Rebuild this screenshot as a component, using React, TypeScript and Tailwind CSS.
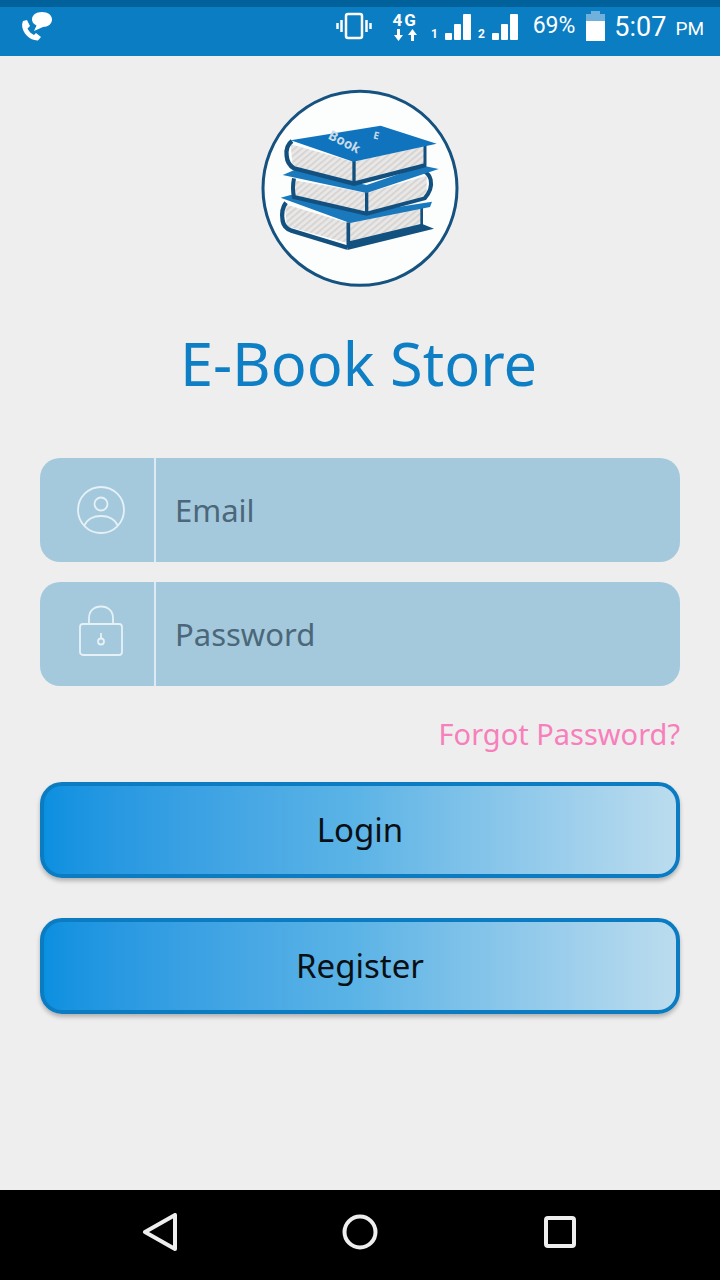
const font = { fontFamily: '"Noto Sans", sans-serif' };
const statusFont = { fontFamily: 'Roboto, sans-serif' };

/** Book stack logo, coordinates follow the reference crop at 3x */
const BookLogo = () => (
  <svg width="220" height="215" viewBox="0 0 660 645" className="block">
    <defs>
      <pattern id="pages" width="14" height="14" patternUnits="userSpaceOnUse" patternTransform="rotate(-40)">
        <rect width="14" height="14" fill="#e9e8e6" />
        <rect width="14" height="6" fill="#d6d5d4" />
      </pattern>
    </defs>
    <circle cx="330" cy="322" r="291" fill="#fcfdfd" stroke="#16527f" strokeWidth="9" />
    {/* bottom book */}
    <path d="M105 370 L292 425 L515 380 L515 434 L292 486 L110 436 Z" fill="url(#pages)" />
    <path d="M108 365 Q92 385 98 420 Q102 440 122 448 L292 500" fill="none" stroke="#12507f" strokeWidth="13" />
    <path d="M515 378 V436" stroke="#12507f" strokeWidth="8" />
    <path d="M295 424 V500" stroke="#12507f" strokeWidth="11" />
    <path d="M292 507 L552 443 L515 428 L292 482 Z" fill="#12507f" />
    <path d="M92 350 L130 340 L352 392 L546 362 L540 378 L300 426 Z" fill="#1a78bd" />
    {/* middle book */}
    <path d="M132 298 L348 335 L348 396 L132 346 Z" fill="url(#pages)" />
    <path d="M352 335 L530 284 L530 346 L352 392 Z" fill="url(#pages)" />
    <path d="M132 292 Q126 320 132 348 L350 398 L524 352 Q548 325 542 296 Q538 280 522 270" fill="none" stroke="#12507f" strokeWidth="12" />
    <path d="M350 332 V396" stroke="#12507f" strokeWidth="10" />
    <path d="M98 282 L135 266 L350 312 L520 254 L566 264 L350 336 Z" fill="#1a78bd" />
    {/* top book */}
    <path d="M122 190 L310 242 L525 195 L525 252 L310 304 L128 258 Z" fill="url(#pages)" />
    <path d="M126 180 Q106 195 110 225 Q112 250 132 262 L312 308 L528 252" fill="none" stroke="#12507f" strokeWidth="13" />
    <path d="M525 190 V254" stroke="#12507f" strokeWidth="9" />
    <path d="M312 238 V306" stroke="#12507f" strokeWidth="10" />
    <path d="M122 178 L392 134 L560 188 L310 242 Z" fill="#0f74bd" />
    <text x="0" y="0" transform="translate(232 172) rotate(27)" fill="#c9dbe9" fontSize="40" fontWeight="700" style={font}>Book</text>
    <text x="0" y="0" transform="translate(368 172) rotate(14)" fill="#c9dbe9" fontSize="30" fontWeight="700" style={font}>E</text>
  </svg>
);

const UserIcon = () => (
  <svg width="50" height="50" viewBox="0 0 50 50" fill="none" stroke="#e6f1f7" strokeWidth="1.8">
    <circle cx="25" cy="25" r="23" />
    <circle cx="25" cy="19" r="6.500" />
    <path d="M8.500 40.500 C11 34 18 31 25 31 C32 31 39 34 41.500 40.500" />
  </svg>
);

const LockIcon = () => (
  <svg width="46" height="52" viewBox="0 0 46 52" fill="none" stroke="#e6f1f7" strokeWidth="1.8" className="-mt-[7px]">
    <rect x="2" y="19" width="42" height="31" rx="3" />
    <path d="M11 19 V13 C11 6 16 1.500 23 1.500 C30 1.500 35 6 35 13 V19" />
    <circle cx="23" cy="36.500" r="3" />
    <path d="M23 28 V33.500" />
  </svg>
);

/** Login form input row */
function FormField({ icon, label }: { icon: React.ReactNode; label: string }) {
  return (
    <div className="flex h-[104px] items-stretch overflow-hidden rounded-[20px] bg-[#a4c9dc]">
      <div className="flex w-[116px] items-center justify-center border-r-2 border-[#dcebf3] pl-[8px]">{icon}</div>
      <span className="flex items-center pl-[19px] text-[31px] text-[#4b6779]">{label}</span>
    </div>
  );
}

function GradientButton({ label }: { label: string }) {
  return (
    <button
      type="button"
      className="h-[96px] w-full rounded-[22px] border-4 border-[#0c7cc2] bg-gradient-to-r from-[#0a90e0] via-[#5cb4e6] to-[#bbdcee] text-[33px] text-[#0a0f14] shadow-[0_3px_4px_rgba(0,0,0,0.25)]"
    >
      {label}
    </button>
  );
}

/** Signal strength bars with the SIM number beside them */
function SignalBars({ sim, className }: { sim: string; className: string }) {
  return (
    <svg width="43" height="28" viewBox="0 0 43 28" fill="white" className={className}>
      <text x="1" y="26" fontSize="12" fontWeight="700" style={statusFont}>{sim}</text>
      <rect x="15" y="21" width="7" height="7" rx="1" />
      <rect x="24" y="12" width="7" height="16" rx="1" />
      <rect x="33" y="2" width="8" height="26" rx="1" />
    </svg>
  );
}

export default function App() {
  return (
    <div className="flex h-[1280px] w-[720px] flex-col overflow-hidden bg-[#eeeeee]" style={font}>
      {/* Status bar */}
      <div className="h-[56px] shrink-0 border-t-[7px] border-[#01619b] bg-[#0a7dc3] text-white" style={statusFont}>
        <div className="flex h-full items-center pb-[11px] pl-[20px] pr-[16px]">
          <svg width="33" height="29" viewBox="0 0 33 29" fill="white">
            <path d="M3 9 L7 8 L10 14 L7.500 16.500 C9 20 12 22 14 23 L16 21 L21 25 L18 28.500 C9 29 -1 18 3 9 Z" />
            <path d="M22 0 C28 0 32 3 32 7.500 C32 12 28 15 23 15 L14 19 L16.500 13.500 C13.500 12 12 10 12 7.500 C12 3 16 0 22 0 Z" />
          </svg>
          <div className="ml-auto flex items-center">
            <svg width="36" height="28" viewBox="0 0 36 28" fill="none" stroke="white" strokeWidth="2.500">
              <rect x="10" y="2" width="16" height="24" rx="2" />
              <path d="M5.500 8 V20 M1.500 11 V17 M30.500 8 V20 M34.500 11 V17" />
            </svg>
            <div className="ml-[20px] flex w-[27px] flex-col items-center">
              <span className="text-[17px] font-bold leading-[17px] tracking-[2px]">4G</span>
              <svg width="27" height="12" viewBox="0 0 27 12" fill="white">
                <path d="M5 0 H8 V6 H11 L6.500 12 L2 6 H5 Z" />
                <path d="M19 12 H22 V6 H25 L20.500 0 L16 6 H19 Z" />
              </svg>
            </div>
            <SignalBars sim="1" className="ml-[11px]" />
            <SignalBars sim="2" className="ml-[4px]" />
            <span className="ml-[13px] pt-[1px] text-[23px]">69%</span>
            <div className="ml-[11px] flex h-[30px] w-[19px] flex-col items-center">
              <div className="h-[3px] w-[9px] bg-[#6fb0dc]" />
              <div className="h-[7px] w-full bg-[#6fb0dc]" />
              <div className="w-full flex-1 bg-white" />
            </div>
            <span className="ml-[9px] pt-[3px] text-[27px]">5:07</span>
            <span className="ml-[9px] pt-[6px] text-[19px]">PM</span>
          </div>
        </div>
      </div>

      {/* Login form */}
      <main className="flex flex-1 flex-col px-[40px]">
        <div className="mt-[25px] flex justify-center">
          <BookLogo />
        </div>
        <h1 className="mt-[27px] pr-[3px] text-center text-[59.500px] font-normal leading-[80px] text-[#0e7fc4]">E-Book Store</h1>
        <div className="mt-[55px] flex flex-col gap-[20px]">
          <FormField icon={<UserIcon />} label="Email" />
          <FormField icon={<LockIcon />} label="Password" />
        </div>
        <p className="mt-[28px] text-right text-[29px] leading-[40px] text-[#f77fbc]">Forgot Password?</p>
        <div className="mt-[28px] flex flex-col gap-[40px]">
          <GradientButton label="Login" />
          <GradientButton label="Register" />
        </div>
      </main>

      {/* Navigation bar */}
      <div className="flex h-[90px] shrink-0 items-center justify-center gap-[164px] bg-black pb-[6px]">
        <svg width="36" height="38" viewBox="0 0 36 38" fill="none" stroke="#eeeeee" strokeWidth="4" strokeLinejoin="round">
          <path d="M33 2 V36 L3 19 Z" />
        </svg>
        <svg width="36" height="36" viewBox="0 0 36 36" fill="none" stroke="#eeeeee" strokeWidth="4">
          <circle cx="18" cy="18" r="15.500" />
        </svg>
        <svg width="36" height="36" viewBox="0 0 36 36" fill="none" stroke="#eeeeee" strokeWidth="4">
          <rect x="4" y="4" width="28" height="28" rx="2" />
        </svg>
      </div>
    </div>
  );
}
